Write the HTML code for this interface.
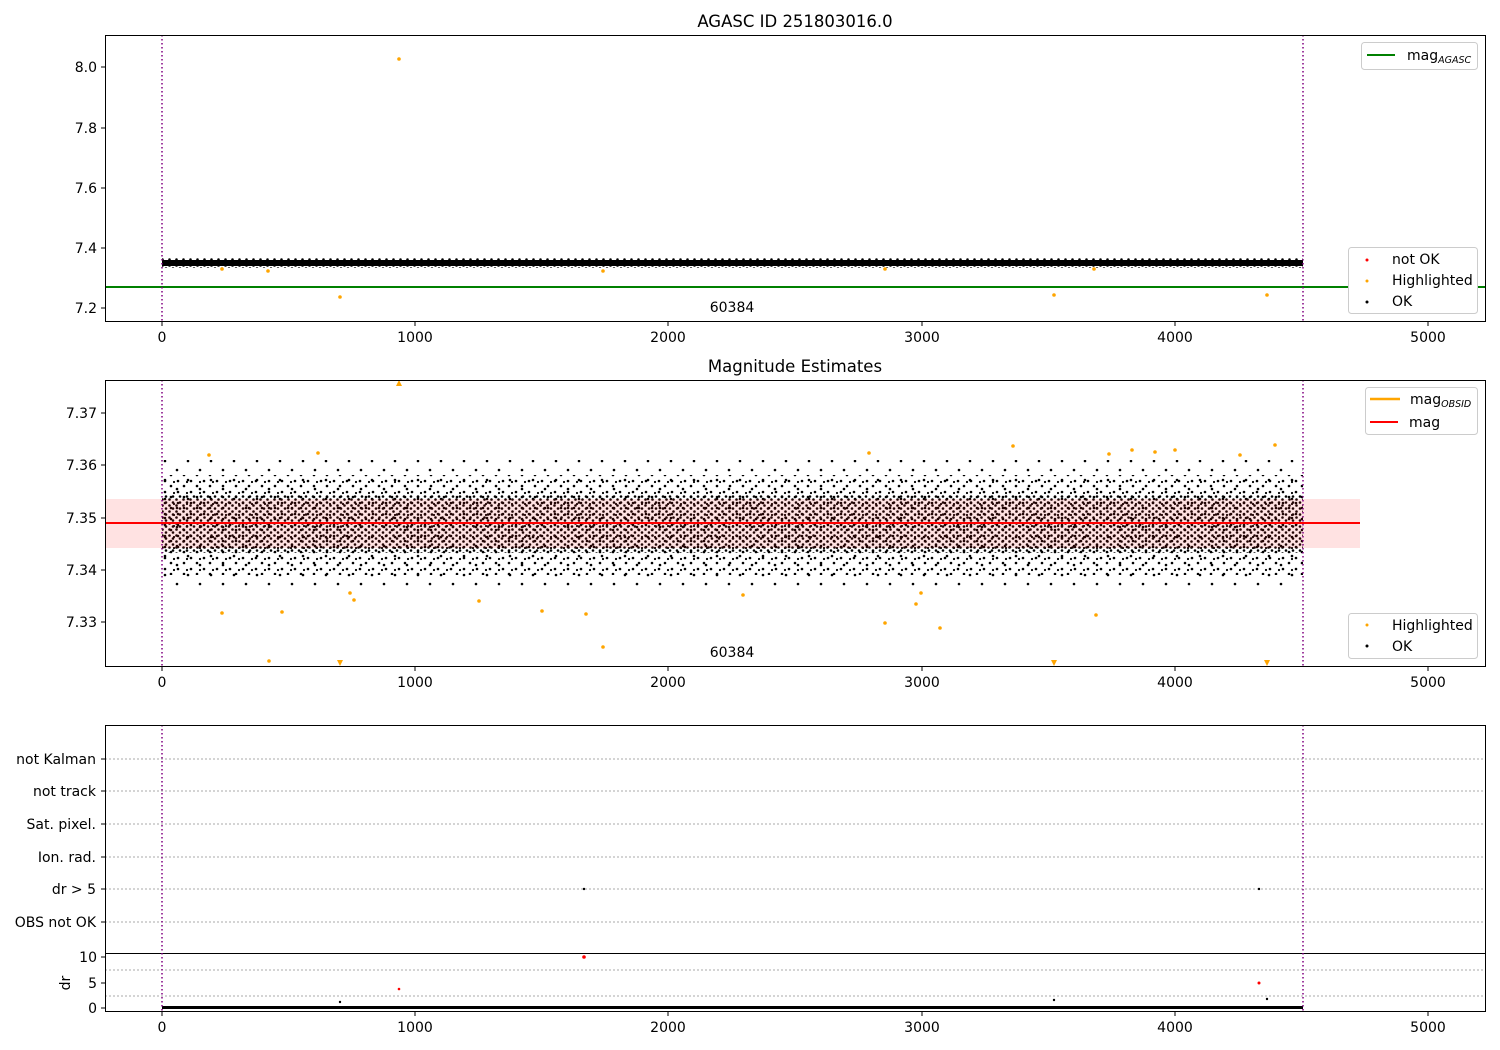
<!DOCTYPE html>
<html><head><meta charset="utf-8"><style>body{margin:0;background:#fff}svg{display:block;font-family:"DejaVu Sans","Liberation Sans",sans-serif}</style></head><body>
<svg width="1500" height="1050" viewBox="0 0 1500 1050" xmlns="http://www.w3.org/2000/svg">
<defs>
<pattern id="d" width="7" height="6" patternUnits="userSpaceOnUse"><circle cx="1.5" cy="1.5" r="1.3" fill="#000"/><circle cx="5" cy="4.5" r="1.3" fill="#000"/></pattern>
<pattern id="s" width="13" height="11" patternUnits="userSpaceOnUse"><circle cx="2" cy="2" r="1.3" fill="#000"/><circle cx="9" cy="8" r="1.3" fill="#000"/><circle cx="5" cy="9" r="1.1" fill="#000"/></pattern>
<pattern id="v" width="23" height="19" patternUnits="userSpaceOnUse"><circle cx="4" cy="5" r="1.3" fill="#000"/><circle cx="16" cy="14" r="1.3" fill="#000"/></pattern>
</defs>
<g font-size="14" fill="#000">
<!-- Panel 1 -->
<text x="795" y="27" font-size="16.5" text-anchor="middle">AGASC ID 251803016.0</text>
<line x1="105" y1="287" x2="1485" y2="287" stroke="green" stroke-width="2"/>
<rect x="162" y="258" width="1141" height="10" fill="url(#d)"/>
<rect x="162" y="260" width="1141" height="6" fill="#000"/>
<g fill="orange"><circle cx="399" cy="59" r="1.8"/><circle cx="340" cy="297" r="1.8"/><circle cx="268" cy="271" r="1.8"/><circle cx="222" cy="269" r="1.8"/><circle cx="603" cy="271" r="1.8"/><circle cx="1054" cy="295" r="1.8"/><circle cx="1267" cy="295" r="1.8"/><circle cx="885" cy="269" r="1.8"/><circle cx="1094" cy="269" r="1.8"/></g>
<line x1="162" y1="35" x2="162" y2="321" stroke="purple" stroke-width="1.5" stroke-dasharray="1.5,2.5"/>
<line x1="1303" y1="35" x2="1303" y2="321" stroke="purple" stroke-width="1.5" stroke-dasharray="1.5,2.5"/>
<text x="732" y="312" text-anchor="middle">60384</text>
<rect x="105.5" y="35.5" width="1380" height="286" fill="none" stroke="#000"/>
<g stroke="#000"><line x1="101" y1="308" x2="105" y2="308"/><line x1="101" y1="248" x2="105" y2="248"/><line x1="101" y1="188" x2="105" y2="188"/><line x1="101" y1="128" x2="105" y2="128"/><line x1="101" y1="67" x2="105" y2="67"/></g>
<g text-anchor="end"><text x="97" y="313">7.2</text><text x="97" y="253">7.4</text><text x="97" y="193">7.6</text><text x="97" y="133">7.8</text><text x="97" y="72">8.0</text></g>
<g stroke="#000"><line x1="162" y1="322" x2="162" y2="326"/><line x1="415" y1="322" x2="415" y2="326"/><line x1="668" y1="322" x2="668" y2="326"/><line x1="922" y1="322" x2="922" y2="326"/><line x1="1175" y1="322" x2="1175" y2="326"/><line x1="1428" y1="322" x2="1428" y2="326"/></g>
<g text-anchor="middle"><text x="162" y="342">0</text><text x="415" y="342">1000</text><text x="668" y="342">2000</text><text x="922" y="342">3000</text><text x="1175" y="342">4000</text><text x="1428" y="342">5000</text></g>
<rect x="1361.5" y="42.5" width="116" height="27" rx="3" fill="#fff" stroke="#ccc"/>
<line x1="1367" y1="55" x2="1395" y2="55" stroke="green" stroke-width="2"/>
<text x="1407" y="60">mag<tspan font-size="9.5" font-style="italic" dy="3">AGASC</tspan></text>
<rect x="1348.5" y="247.5" width="129" height="66" rx="3" fill="#fff" stroke="#ccc"/>
<circle cx="1367" cy="260" r="1.5" fill="red"/><text x="1392" y="264">not OK</text>
<circle cx="1367" cy="281" r="1.5" fill="orange"/><text x="1392" y="285">Highlighted</text>
<circle cx="1367" cy="302" r="1.5" fill="#000"/><text x="1392" y="306">OK</text>

<!-- Panel 2 -->
<text x="795" y="372" font-size="16.5" text-anchor="middle">Magnitude Estimates</text>
<rect x="162" y="460" width="1141" height="130" fill="url(#v)"/>
<rect x="162" y="475" width="1141" height="100" fill="url(#s)"/>
<rect x="162" y="495" width="1141" height="58" fill="url(#d)"/>
<rect x="105" y="499" width="1255" height="49" fill="#ff2020" fill-opacity="0.13"/>
<line x1="105" y1="523" x2="1360" y2="523" stroke="red" stroke-width="2"/>
<g fill="orange"><circle cx="209" cy="455" r="1.8"/><circle cx="222" cy="613" r="1.8"/><circle cx="282" cy="612" r="1.8"/><circle cx="318" cy="453" r="1.8"/><circle cx="350" cy="593" r="1.8"/><circle cx="354" cy="600" r="1.8"/><circle cx="479" cy="601" r="1.8"/><circle cx="542" cy="611" r="1.8"/><circle cx="586" cy="614" r="1.8"/><circle cx="603" cy="647" r="1.8"/><circle cx="269" cy="661" r="1.8"/><circle cx="743" cy="595" r="1.8"/><circle cx="869" cy="453" r="1.8"/><circle cx="885" cy="623" r="1.8"/><circle cx="916" cy="604" r="1.8"/><circle cx="921" cy="593" r="1.8"/><circle cx="940" cy="628" r="1.8"/><circle cx="1013" cy="446" r="1.8"/><circle cx="1096" cy="615" r="1.8"/><circle cx="1109" cy="454" r="1.8"/><circle cx="1132" cy="450" r="1.8"/><circle cx="1155" cy="452" r="1.8"/><circle cx="1175" cy="450" r="1.8"/><circle cx="1240" cy="455" r="1.8"/><circle cx="1275" cy="445" r="1.8"/></g>
<g fill="orange"><path d="M396 386 L402 386 L399 380Z"/><path d="M337 660 L343 660 L340 666Z"/><path d="M1051 660 L1057 660 L1054 666Z"/><path d="M1264 660 L1270 660 L1267 666Z"/></g>
<line x1="162" y1="380" x2="162" y2="666" stroke="purple" stroke-width="1.5" stroke-dasharray="1.5,2.5"/>
<line x1="1303" y1="380" x2="1303" y2="666" stroke="purple" stroke-width="1.5" stroke-dasharray="1.5,2.5"/>
<text x="732" y="657" text-anchor="middle">60384</text>
<rect x="105.5" y="380.5" width="1380" height="286" fill="none" stroke="#000"/>
<g stroke="#000"><line x1="101" y1="622" x2="105" y2="622"/><line x1="101" y1="570" x2="105" y2="570"/><line x1="101" y1="518" x2="105" y2="518"/><line x1="101" y1="465" x2="105" y2="465"/><line x1="101" y1="413" x2="105" y2="413"/></g>
<g text-anchor="end"><text x="97" y="627">7.33</text><text x="97" y="575">7.34</text><text x="97" y="523">7.35</text><text x="97" y="470">7.36</text><text x="97" y="418">7.37</text></g>
<g stroke="#000"><line x1="162" y1="667" x2="162" y2="671"/><line x1="415" y1="667" x2="415" y2="671"/><line x1="668" y1="667" x2="668" y2="671"/><line x1="922" y1="667" x2="922" y2="671"/><line x1="1175" y1="667" x2="1175" y2="671"/><line x1="1428" y1="667" x2="1428" y2="671"/></g>
<g text-anchor="middle"><text x="162" y="687">0</text><text x="415" y="687">1000</text><text x="668" y="687">2000</text><text x="922" y="687">3000</text><text x="1175" y="687">4000</text><text x="1428" y="687">5000</text></g>
<rect x="1365.5" y="387.5" width="112" height="47" rx="3" fill="#fff" stroke="#ccc"/>
<line x1="1370" y1="399" x2="1400" y2="399" stroke="orange" stroke-width="2.5"/>
<text x="1410" y="404">mag<tspan font-size="9.5" font-style="italic" dy="3">OBSID</tspan></text>
<line x1="1370" y1="422" x2="1398" y2="422" stroke="red" stroke-width="2"/>
<text x="1409" y="427">mag</text>
<rect x="1348.5" y="613.5" width="129" height="45" rx="3" fill="#fff" stroke="#ccc"/>
<circle cx="1367" cy="625" r="1.5" fill="orange"/><text x="1392" y="630">Highlighted</text>
<circle cx="1367" cy="646" r="1.5" fill="#000"/><text x="1392" y="651">OK</text>

<!-- Panel 3 -->
<g stroke="#aaa" stroke-dasharray="2,2"><line x1="105" y1="759" x2="1485" y2="759"/><line x1="105" y1="791" x2="1485" y2="791"/><line x1="105" y1="824" x2="1485" y2="824"/><line x1="105" y1="857" x2="1485" y2="857"/><line x1="105" y1="889" x2="1485" y2="889"/><line x1="105" y1="922" x2="1485" y2="922"/><line x1="105" y1="970" x2="1485" y2="970"/><line x1="105" y1="996" x2="1485" y2="996"/></g>
<g text-anchor="end"><text x="96" y="764">not Kalman</text><text x="96" y="796">not track</text><text x="96" y="829">Sat. pixel.</text><text x="96" y="862">Ion. rad.</text><text x="96" y="894">dr &gt; 5</text><text x="96" y="927">OBS not OK</text></g>
<g stroke="#000"><line x1="101" y1="759" x2="105" y2="759"/><line x1="101" y1="791" x2="105" y2="791"/><line x1="101" y1="824" x2="105" y2="824"/><line x1="101" y1="857" x2="105" y2="857"/><line x1="101" y1="889" x2="105" y2="889"/><line x1="101" y1="922" x2="105" y2="922"/></g>
<circle cx="584" cy="889" r="1.2" fill="#000"/><circle cx="1259" cy="889" r="1.2" fill="#000"/>
<line x1="105" y1="953.5" x2="1485" y2="953.5" stroke="#000"/>
<rect x="162" y="1006" width="1141" height="3" fill="#000"/>
<circle cx="584" cy="957" r="1.8" fill="red"/><circle cx="1259" cy="983" r="1.5" fill="red"/><circle cx="399" cy="989" r="1.3" fill="red"/>
<circle cx="340" cy="1002" r="1.2" fill="#000"/><circle cx="1054" cy="1000" r="1.2" fill="#000"/><circle cx="1267" cy="999" r="1.2" fill="#000"/>
<line x1="162" y1="725" x2="162" y2="1011" stroke="purple" stroke-width="1.5" stroke-dasharray="1.5,2.5"/>
<line x1="1303" y1="725" x2="1303" y2="1011" stroke="purple" stroke-width="1.5" stroke-dasharray="1.5,2.5"/>
<rect x="105.5" y="725.5" width="1380" height="286" fill="none" stroke="#000"/>
<g stroke="#000"><line x1="101" y1="957" x2="105" y2="957"/><line x1="101" y1="983" x2="105" y2="983"/><line x1="101" y1="1008" x2="105" y2="1008"/></g>
<g text-anchor="end"><text x="97" y="962">10</text><text x="97" y="988">5</text><text x="97" y="1013">0</text></g>
<text transform="translate(70,983) rotate(-90)" text-anchor="middle">dr</text>
<g stroke="#000"><line x1="162" y1="1012" x2="162" y2="1016"/><line x1="415" y1="1012" x2="415" y2="1016"/><line x1="668" y1="1012" x2="668" y2="1016"/><line x1="922" y1="1012" x2="922" y2="1016"/><line x1="1175" y1="1012" x2="1175" y2="1016"/><line x1="1428" y1="1012" x2="1428" y2="1016"/></g>
<g text-anchor="middle"><text x="162" y="1032">0</text><text x="415" y="1032">1000</text><text x="668" y="1032">2000</text><text x="922" y="1032">3000</text><text x="1175" y="1032">4000</text><text x="1428" y="1032">5000</text></g>
</g>
</svg>
</body></html>
